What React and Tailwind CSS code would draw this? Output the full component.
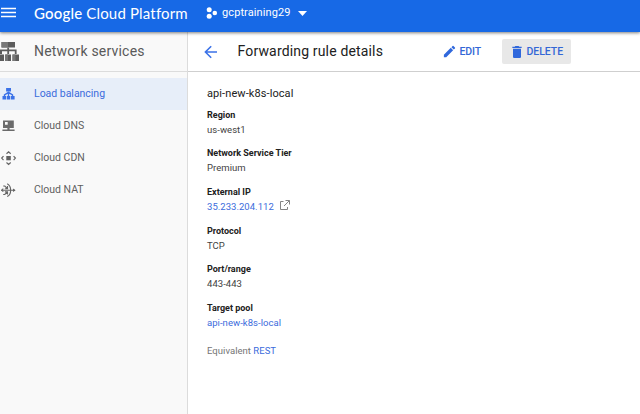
import React from "react";

const MenuIcon = () => (
  <svg className="block h-3 w-4" viewBox="0 0 16 12" fill="none" stroke="#fff" strokeWidth="1.3">
    <path d="M1 1.500h15M1 5.500h15M1 9.500h15" />
  </svg>
);

const ProjectIcon = () => (
  <svg className="block h-3 w-3" viewBox="0 0 12 12" fill="#fff">
    <circle cx="3.200" cy="2.800" r="2.500" />
    <circle cx="8.800" cy="6" r="2.300" />
    <circle cx="3.200" cy="9.300" r="2.500" />
  </svg>
);

const NetworkIcon = () => (
  <svg className="block h-5 w-5" viewBox="0 0 20 20" fill="#5c5c5c">
    <path d="M1.500 0h13.500v5.500h-13.500z" />
    <path d="M7.300 5.500h1.800v2h7.500v4.500h-1.800v-2.700h-5.700v2.700h-1.800v-2.700H2v2.700H0V7.500h7.300z" />
    <path d="M0 12.500h4v6.500H0zM5.200 12.500h5.800v6.500H5.200zM12.500 12.500h6.500v6.500h-6.500z" />
    <path d="M1.500 0h6.500v5.500h-6.500zM5.200 12.500h2.800v6.500H5.200zM12.500 12.500h3v6.500h-3z" fill="#777" />
  </svg>
);

const BalancerIcon = () => (
  <svg className="block h-3.5 w-3.5" viewBox="0 0 14 14" fill="#3b72e8">
    <path d="M5.100 1h4.900v3.600H5.100zM1.500 9h3.600v3.600H1.500zM5.800 9h3.500v3.600H5.800zM10 9h3.600v3.600H10z" />
    <path d="M7.500 4.500V9M3.500 9V7.800L7.500 5.400l4 2.400V9" fill="none" stroke="#3b72e8" strokeWidth="1.4" />
  </svg>
);

const DnsIcon = () => (
  <svg className="block h-3.5 w-3.5" viewBox="0 0 14 14" fill="#6b6b6b">
    <path fillRule="evenodd" d="M2 1.400h10.800v7.600H2zM4 3v2.700h2.700V3z" />
    <path d="M6.400 9h2.200v1.500h5v1.600H1.400v-1.600h5z" />
  </svg>
);

const CdnIcon = () => (
  <svg className="block h-3.5 w-3.5 overflow-visible" viewBox="0 0 14 14" fill="none" stroke="#666" strokeWidth="1.2">
    <path d="M5.300 5h4.500v4.300H5.300z" fill="#616161" stroke="none" />
    <path d="M5.500 2.800 7.600.8l2.100 2M5.500 11.500l2.100 2 2.100-2M2.500 5.100.7 7.100l1.800 2M12.600 5.100l1.800 2-1.800 2" />
  </svg>
);

const NatIcon = () => (
  <svg className="block h-3.5 w-3.5 overflow-visible" viewBox="0 0 14 14" fill="none" stroke="#666" strokeWidth="1.15">
    <path d="M0 7.200h14M6.200.8c4.600 2.300 4.600 10.500 0 12.800" />
    <path d="M12 5.500v3.400l2.600-1.700z" fill="#666" stroke="none" />
    <path d="M2.200 3h1.600l2.600 2.600M2.200 11.500h1.600l2.600-2.600M6.500 3v2.700H3.900M6.500 11.500V8.800H3.900M2.300 5.700.8 7.200l1.500 1.500" />
  </svg>
);

const BackIcon = () => (
  <svg className="block h-3.5 w-3.5" viewBox="0 0 14 14" fill="none" stroke="#3b72e8" strokeWidth="1.600">
    <path d="M13 7H1.400M7.200 1.200 1.400 7l5.800 5.800" />
  </svg>
);

const EditIcon = () => (
  <svg className="block h-[15px] w-[15px]" viewBox="0 0 24 24" fill="#3068dc">
    <path d="M3 17.250V21h3.750L17.810 9.940l-3.750-3.750L3 17.250zM20.710 7.040a1 1 0 0 0 0-1.410l-2.340-2.340a1 1 0 0 0-1.410 0l-1.830 1.830 3.750 3.750 1.830-1.830z" />
  </svg>
);

const DeleteIcon = () => (
  <svg className="block h-4 w-4" viewBox="0 0 24 24" fill="#3068dc">
    <path d="M6 19c0 1.100.9 2 2 2h8c1.100 0 2-.9 2-2V7H6v12zM19 4h-3.500l-1-1h-5l-1 1H5v2h14V4z" />
  </svg>
);

const ExternalIcon = () => (
  <svg className="mb-[3px] block h-2.5 w-2.5" viewBox="0 0 10 10" fill="none" stroke="#858585" strokeWidth="1">
    <path d="M3.500 1.500h-3v8h7V7M5.500.5h4v4M9.300.7 4 6" />
  </svg>
);

const navItems = [
  { label: "Load balancing", icon: BalancerIcon, active: true },
  { label: "Cloud DNS", icon: DnsIcon },
  { label: "Cloud CDN", icon: CdnIcon },
  { label: "Cloud NAT", icon: NatIcon },
];

const fields = [
  { label: "Region", value: "us-west1" },
  { label: "Network Service Tier", value: "Premium" },
  { label: "External IP", value: "35.233.204.112", link: true, external: true },
  { label: "Protocol", value: "TCP" },
  { label: "Port/range", value: "443-443" },
  { label: "Target pool", value: "api-new-k8s-local", link: true },
];

function Header() {
  return (
    <header className="relative z-10 flex h-8 shrink-0 items-start bg-[#1769e6] text-white shadow-[0_1px_3px_rgba(0,0,0,0.5)]">
      <div className="w-[34px] shrink-0 pt-[7px]"><MenuIcon /></div>
      <div className="w-[172px] shrink-0 whitespace-nowrap pt-[3px] font-['Lato',sans-serif] text-[15px] leading-5 tracking-[0.17px]">
        <span className="font-medium">Google</span> Cloud Platform
      </div>
      <div className="pt-[7px]"><ProjectIcon /></div>
      <span className="ml-1 pt-[5px] text-[11px] leading-4 tracking-[0.1px]">gcptraining29</span>
      <svg className="ml-[7px] mt-[11px] block h-[5px] w-[9px]" viewBox="0 0 9 5" fill="#fff"><path d="M0 0h9L4.500 5z" /></svg>
    </header>
  );
}

function Sidebar() {
  return (
    <aside className="flex w-[188px] shrink-0 flex-col border-r border-[#dcdcdc] bg-[#f9f9f9]">
      <div className="flex h-10 items-center border-b border-[#dcdcdc]">
        <div className="w-[34px] shrink-0"><NetworkIcon /></div>
        <h2 className="whitespace-nowrap text-[14px] tracking-[0.2px] text-[#5a5a5a]">Network services</h2>
      </div>
      <nav className="pt-1.5">
        {navItems.map(({ label, icon: Icon, active }) => (
          <div key={label} className={`flex h-8 items-center text-[10.5px] ${active ? "bg-[#e7eef9] text-[#3b6bdc]" : "text-[#5f5f5f]"}`}>
            <div className="w-[34px] shrink-0 pl-px"><Icon /></div>
            <span className="whitespace-nowrap tracking-[-0.02px]">{label}</span>
          </div>
        ))}
      </nav>
    </aside>
  );
}

function Toolbar() {
  return (
    <div className="flex h-10 shrink-0 items-center border-b border-[#cfcfcf] pl-4">
      <BackIcon />
      <h1 className="ml-[19.5px] w-[202px] whitespace-nowrap text-[14px] tracking-[0.16px] text-[#212121]">Forwarding rule details</h1>
      <button className="flex w-[62.5px] items-center gap-[3px] pl-0.5 text-[10.5px] font-medium tracking-[-0.1px] text-[#3367d6]"><EditIcon />EDIT</button>
      <button className="flex h-[25px] w-[69px] items-center gap-[2px] rounded-[2px] bg-[#e8e8e8] pl-[6.5px] text-[10.5px] font-medium tracking-[-0.05px] text-[#3367d6]"><DeleteIcon />DELETE</button>
    </div>
  );
}

export default function App() {
  return (
    <div className="flex h-[414px] w-[640px] flex-col overflow-hidden bg-white font-['Roboto',sans-serif]">
      <Header />
      <div className="flex min-h-0 flex-1">
        <Sidebar />
        <main className="flex min-w-0 flex-1 flex-col">
          <Toolbar />
          <section className="pl-[19px] pt-[14px]">
            <h3 className="text-[11px] leading-4 tracking-[0.09px] text-[#212121]">api-new-k8s-local</h3>
            <dl className="mt-[5.8px]">
              {fields.map(({ label, value, link, external }) => (
                <div key={label} className="h-[38.6px] text-[9.5px]">
                  <dt className="text-[9px] font-bold leading-[15px] text-[#212121]">{label}</dt>
                  <dd className={`flex h-[13px] items-center gap-1.5 leading-[13px] tracking-[0.04px] ${link ? "text-[#3b6bdc]" : "text-[#424242]"}`}>
                    {value}{external && <ExternalIcon />}
                  </dd>
                </div>
              ))}
            </dl>
            <p className="mt-1 text-[9.5px] leading-[15px] tracking-[0.03px] text-[#757575]">Equivalent <span className="text-[#3b6bdc]">REST</span></p>
          </section>
        </main>
      </div>
    </div>
  );
}
